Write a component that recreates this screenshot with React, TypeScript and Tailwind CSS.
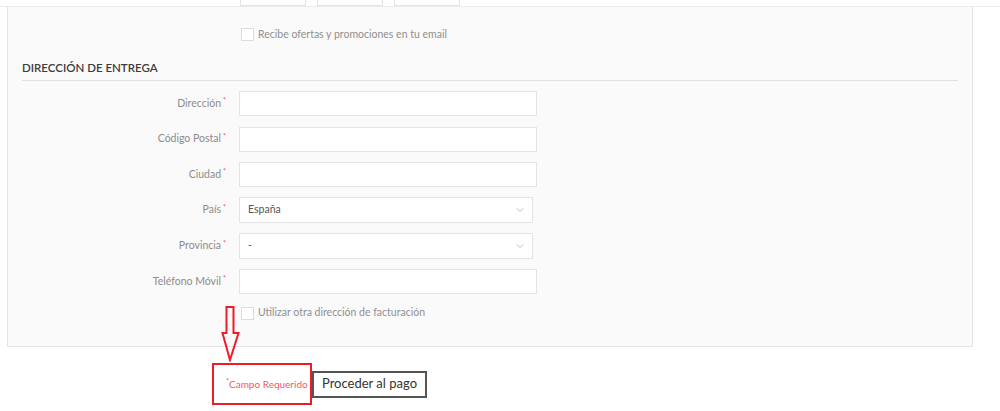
import { ChevronDown } from "lucide-react";

const font = { fontFamily: "Lato, 'Open Sans', sans-serif" };

type FieldProps = {
  label: string;
  select?: string;
};

function Field({ label, select }: FieldProps) {
  return (
    <div className="flex h-[35.6px] items-center">
      <div className="w-[204px] text-right text-[10.5px] text-[#8c8c8c]">
        {label}
        <sup className="ml-[2px] text-[7px] text-[#e8505b]">*</sup>
      </div>
      {select !== undefined ? (
        <div className="ml-[13px] flex h-[26px] w-[294px] items-center justify-between border border-[#e4e4e4] bg-white pl-[8px] pr-[6px] text-[10.5px] text-[#555]">
          <span>{select}</span>
          <ChevronDown size={12} strokeWidth={1.3} className="text-[#999]" />
        </div>
      ) : (
        <div className="ml-[13px] h-[25px] w-[298px] border border-[#e4e4e4] bg-white" />
      )}
    </div>
  );
}

function Check({ label }: { label: string }) {
  return (
    <div className="flex items-center gap-[4px]">
      <span className="h-[13px] w-[13px] border border-[#dcdcdc] bg-white" />
      <span className="text-[10.5px] text-[#8f8f8f]">{label}</span>
    </div>
  );
}

export default function App() {
  return (
    <div className="relative h-[411px] w-[1000px] bg-white" style={font}>
      <div className="flex h-[7px] border-b border-[#ececec] pl-[240px]">
        <span className="mt-[-4px] h-[10px] w-[66px] border border-[#e2e2e2] bg-white" />
        <span className="ml-[11px] mt-[-4px] h-[10px] w-[66px] border border-[#e2e2e2] bg-white" />
        <span className="ml-[11px] mt-[-4px] h-[10px] w-[66px] border border-[#e2e2e2] bg-white" />
      </div>

      <div className="ml-[7px] w-[966px] border border-t-0 border-[#e3e3e3] bg-[#fafafa] px-[14px] pb-[25px]">
        <div className="ml-[219px] pt-[20px]">
          <Check label="Recibe ofertas y promociones en tu email" />
        </div>

        <h2 className="mt-[18px] border-b border-[#e2e2e2] pb-[5px] text-[11.5px] font-semibold leading-[14px] text-[#3c3c3c]">
          DIRECCIÓN DE ENTREGA
        </h2>

        <div className="mt-[5px] flex flex-col">
          <Field label="Dirección" />
          <Field label="Código Postal" />
          <Field label="Ciudad" />
          <Field label="País" select="España" />
          <Field label="Provincia" select="-" />
          <Field label="Teléfono Móvil" />
        </div>

        <div className="ml-[219px] mt-[6px]">
          <Check label="Utilizar otra dirección de facturación" />
        </div>
      </div>

      <div className="ml-[212px] mt-[16px] flex items-center">
        <div className="flex h-[42px] w-[100px] items-center border-2 border-[#ee1c25] pl-[12px]">
          <span className="text-[10px] text-[#ef5a68]">
            <sup className="text-[7px]">*</sup>Campo Requerido
          </span>
        </div>
        <button className="h-[27px] w-[115px] border-2 border-[#555] bg-white text-[13px] text-[#333]">
          Proceder al pago
        </button>
      </div>

      <svg
        className="absolute left-[221px] top-[306px]"
        width="19"
        height="56"
        viewBox="0 0 19 56"
        fill="none"
      >
        <path
          d="M5.5 1 H12.5 V27 H17.5 L9 54 L1.5 27 H5.5 Z"
          stroke="#ee1c25"
          strokeWidth="2"
          strokeLinejoin="miter"
        />
      </svg>
    </div>
  );
}
